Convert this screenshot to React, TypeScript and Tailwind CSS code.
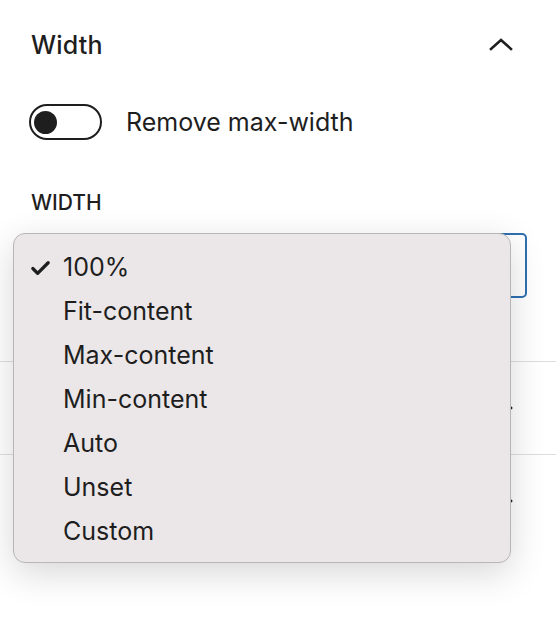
import { Check } from 'lucide-react';

const options = ['100%', 'Fit-content', 'Max-content', 'Min-content', 'Auto', 'Unset', 'Custom'];

function Chevron({ up }: { up?: boolean }) {
  return (
    <svg width="24" height="14" viewBox="0 0 24 14" fill="none" className="block">
      <path
        d={up ? 'M2 12 L12 3 L22 12' : 'M2 2 L12 11 L22 2'}
        stroke="#1e1e1e"
        strokeWidth="2.6"
        strokeLinecap="square"
      />
    </svg>
  );
}

export default function App() {
  return (
    <div
      className="relative w-[556px] h-[644px] bg-white overflow-hidden text-[#1e1e1e]"
      style={{ fontFamily: 'Inter, "Noto Sans", sans-serif' }}
    >
      {/* Width panel */}
      <div className="px-[31px] pb-[63px] border-b-[1.5px] border-[#dedede]">
        <div className="h-[90px] flex items-center justify-between">
          <span className="text-[25px] font-medium tracking-[0.2px] mt-[1px]">Width</span>
          <div className="mr-[12px] -mt-[2px]">
            <Chevron up />
          </div>
        </div>
        <div className="flex items-center gap-[24px] -ml-[2px] mt-[13px]">
          <div className="w-[73px] h-[36px] rounded-full border-[2.5px] border-[#1e1e1e] flex items-center px-[3px]">
            <div className="w-[23px] h-[23px] rounded-full bg-[#1e1e1e]" />
          </div>
          <span className="text-[25px] mt-[1px]">Remove max-width</span>
        </div>
        <div className="mt-[50px] text-[21px] font-medium uppercase leading-none">Width</div>
        <div className="mt-[20px] -ml-[2px] -mr-[2px] h-[65px] rounded-[5px] border-2 border-[#2f6fb1]" />
      </div>

      {/* collapsed panels, titles sit under the popup */}
      <div className="h-[93px] px-[31px] border-b-[1.5px] border-[#dedede] flex items-center justify-end">
        <div className="mr-[12px] mt-[10px]">
          <Chevron />
        </div>
      </div>
      <div className="h-[93px] px-[31px] flex items-center justify-end">
        <div className="mr-[12px] mt-[10px]">
          <Chevron />
        </div>
      </div>

      {/* native select popup */}
      <div className="absolute left-[13px] top-[233px] w-[498px] rounded-[12px] bg-[#ebe7e8] border border-[#b9b6b7] pt-[12px] pb-[8px] shadow-[0_10px_36px_rgba(0,0,0,0.16)]">
        {options.map((o, i) => (
          <div key={o} className="h-[44px] flex items-center text-[25px]">
            <div className="w-[49px] flex justify-end pr-[11px]">
              {i === 0 && <Check size={23} strokeWidth={3.4} color="#1e1e1e" />}
            </div>
            <span>{o}</span>
          </div>
        ))}
      </div>
    </div>
  );
}
